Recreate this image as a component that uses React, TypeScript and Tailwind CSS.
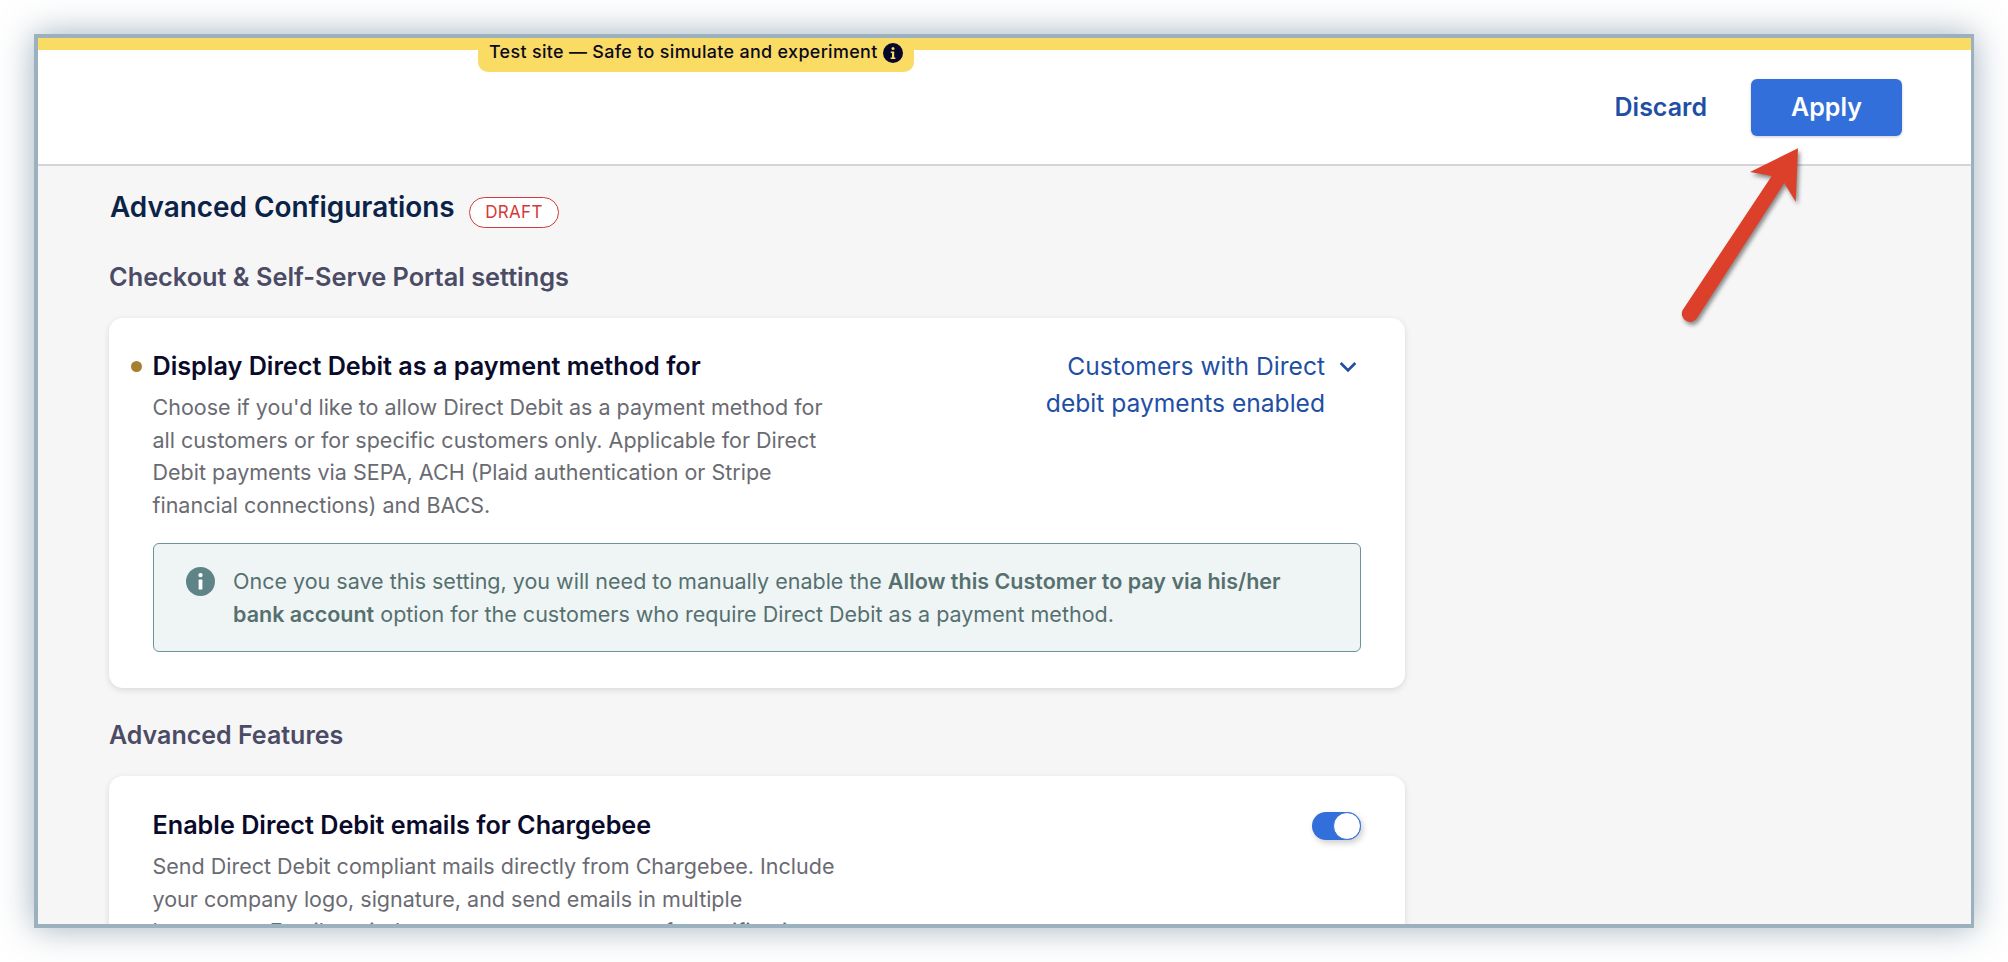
function InfoDot({ className }: { className: string }) {
  return (
    <svg viewBox="0 0 20 20" className={className}>
      <circle cx="10" cy="10" r="10" fill="currentColor" />
      <circle cx="10" cy="5.6" r="1.5" fill="#fff" />
      <rect x="8.7" y="8.6" width="2.6" height="7" rx="0.6" fill="#fff" />
    </svg>
  );
}

export default function App() {
  return (
    <div className="h-[962px] w-[2008px] bg-white p-[34px] font-['Inter',sans-serif]">
      <div className="relative flex h-full flex-col overflow-hidden border-4 border-r-[3px] border-[#9bb1be] bg-[#f6f6f6] shadow-[0_0_32px_rgba(70,100,125,0.5)]">
        <div className="h-3 shrink-0 bg-[#fadb64]" />
        <div className="absolute left-[440px] top-0 flex h-[34px] w-[436px] items-center gap-[5px] rounded-b-[10px] bg-[#fadb64] pl-[11px] pb-[5px] text-[17.92px] font-medium tracking-[0.33px] text-[#0a0a1e]">
          <span>Test site — Safe to simulate and experiment</span>
          <svg viewBox="0 0 20 20" className="h-5 w-5 shrink-0">
            <circle cx="10" cy="10" r="10" fill="#07072a" />
            <circle cx="10" cy="5.4" r="1.5" fill="#fadb64" />
            <path d="M7.8 8.4h3.4v6h1.2v1.6H7.6v-1.6h1.4V10H7.8z" fill="#fadb64" />
          </svg>
        </div>

        <header className="flex h-[116px] shrink-0 items-center justify-end gap-[44px] border-b-2 border-[#d3d5d9] bg-white pr-[69px]">
          <button className="pt-[2px] text-[25px] font-semibold text-[#1f4fa5]">Discard</button>
          <button className="h-[57px] w-[151px] rounded-[6px] bg-[#336fdb] pt-[2px] text-[25px] font-semibold text-white shadow-[0_1px_3px_rgba(0,0,0,0.2)]">
            Apply
          </button>
        </header>

        <main className="flex-1 overflow-hidden pl-[71px]">
          <div className="mt-[25px] flex h-[33px] items-center">
            <h1 className="ml-[1px] w-[346px] whitespace-nowrap pt-[1px] text-[27.9px] font-semibold leading-none text-[#0b2348]">
              Advanced Configurations
            </h1>
            <span className="ml-[13px] mt-[10px] flex h-[31px] w-[90px] items-center justify-center rounded-full border border-[#d33a3a] bg-white text-[17px] tracking-[0.3px] text-[#d33a3a]">
              DRAFT
            </span>
          </div>
          <h2 className="mt-[37px] text-[25.3px] font-semibold leading-[32px] text-[#4b4b66]">
            Checkout &amp; Self-Serve Portal settings
          </h2>

          <section className="mt-[25px] h-[370px] w-[1296px] rounded-[14px] bg-white pl-[43.5px] pr-[44px] pt-[31px] shadow-[0_2px_6px_rgba(0,0,0,0.12)]">
            <div className="flex justify-between">
              <div>
                <div className="relative text-[25.2px] font-semibold leading-[34px] text-[#0a0a2a]">
                  <span className="absolute -left-[22px] top-[12px] h-[11px] w-[11px] rounded-full bg-[#a5812f]" />
                  Display Direct Debit as a payment method for
                </div>
                <p className="mt-[8px] w-[695px] text-[21.5px] leading-[32.5px] text-[#6a6b72]">
                  Choose if you'd like to allow Direct Debit as a payment method for all customers or for specific
                  customers only. Applicable for Direct Debit payments via SEPA, ACH (Plaid authentication or Stripe
                  financial connections) and BACS.
                </p>
              </div>
              <div className="-mt-[1px] flex items-start gap-[14px] pr-[4px] text-[24.6px] leading-[37px] text-[#1f4fa5]">
                <div className="w-[300px] text-right">Customers with Direct debit payments enabled</div>
                <svg viewBox="0 0 16 16" className="mt-[10px] h-[18px] w-[18px] fill-none stroke-[#1f4fa5] stroke-[2.4]">
                  <path d="M1.5 4.5 8 11l6.5-6.5" />
                </svg>
              </div>
            </div>
            <div className="mt-[22px] flex h-[109px] gap-[18px] rounded-[6px] border border-[#6f9199] bg-[#eff5f5] pl-[32.5px] pt-[21px] text-[21.5px] leading-[32.5px] text-[#56706f]">
              <InfoDot className="mt-[2px] h-[29px] w-[29px] shrink-0 text-[#5f8488]" />
              <p className="w-[1090px]">
                Once you save this setting, you will need to manually enable the{" "}
                <b className="font-semibold">Allow this Customer to pay via his/her bank account</b> option for the
                customers who require Direct Debit as a payment method.
              </p>
            </div>
          </section>

          <h2 className="mt-[32px] text-[25px] font-semibold leading-[30px] text-[#4b4b66]">Advanced Features</h2>

          <section className="mt-[26px] h-[300px] w-[1296px] rounded-[14px] bg-white pl-[43.5px] pr-[44px] pt-[32px] shadow-[0_2px_6px_rgba(0,0,0,0.12)]">
            <div className="flex justify-between">
              <div>
                <div className="text-[25.2px] font-semibold leading-[34px] text-[#0a0a2a]">
                  Enable Direct Debit emails for Chargebee
                </div>
                <p className="mt-[8px] w-[695px] text-[21.5px] leading-[32.5px] text-[#6a6b72]">
                  Send Direct Debit compliant mails directly from Chargebee. Include your company logo, signature, and
                  send emails in multiple languages. Email reminders are sent to customers for notifications.
                </p>
              </div>
              <div className="relative mt-[4px] h-[28px] w-[49px] rounded-full bg-[#336fdb] shadow-[2px_3px_6px_rgba(0,0,0,0.2)]">
                <span className="absolute right-0 top-0 h-[28px] w-[28px] rounded-full border-[1.5px] border-[#336fdb] bg-white" />
              </div>
            </div>
          </section>
        </main>

        <svg viewBox="0 0 150 210" className="absolute left-[1632px] top-[92px] h-[210px] w-[150px] overflow-visible drop-shadow-[2px_3px_2px_rgba(0,0,0,0.45)]">
          <path d="M128 18.3 125.7 71.7 114.3 53 27 188a8.2 8.2 0 0 1-14.3-8L101.7 46 80 42z" fill="#dc3f2a" />
        </svg>
      </div>
    </div>
  );
}
